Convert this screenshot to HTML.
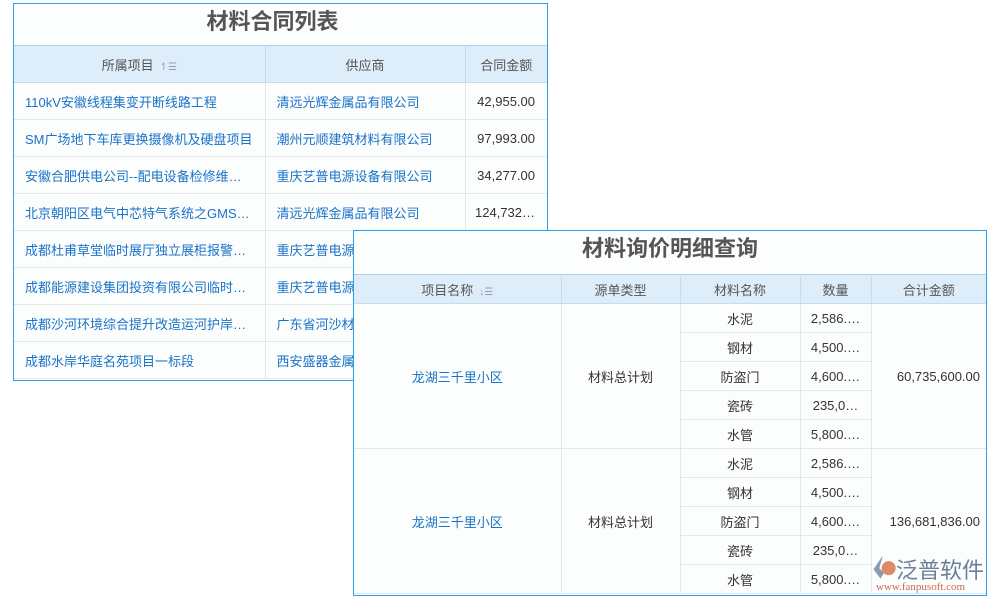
<!DOCTYPE html><html><head><meta charset="utf-8"><style>
body{margin:0;width:1000px;height:600px;background:#fff;position:relative;overflow:hidden;font-family:"Liberation Sans","Noto Sans CJK SC",sans-serif;font-size:13px;color:#333}
.p{position:absolute;border:1px solid #2aa0e8;background:#fcfdfd;box-sizing:border-box;overflow:hidden}
.t{text-align:center;font-size:22px;font-weight:bold;color:#555}
table{border-collapse:collapse;table-layout:fixed;position:absolute;left:0;width:100%}
td,th{border:1px solid #e4e8ea;padding:0;overflow:hidden;white-space:nowrap}
tr td:first-child,tr th:first-child{border-left:none}
tr td:last-child,tr th:last-child{border-right:none}
th{background:#deedfa;font-weight:normal;color:#555;border-color:#c5dcef;border-top:1px solid #a9d0ef}
.b{color:#1a73c8}
.ic{color:#99b;font-size:10px;margin-left:6px}
</style></head><body>
<div class="p" style="left:13px;top:3px;width:535px;height:378px">
<div class="t" style="height:41px;line-height:36px;padding-right:16px">材料合同列表</div>
<table style="top:41px">
<colgroup><col style="width:251px"><col style="width:200px"><col></colgroup>
<tr style="height:37px"><th>所属项目<span class="ic">↿☰</span></th><th>供应商</th><th>合同金额</th></tr>
<tr style="height:37px"><td class="b" style="padding-left:11px">110kV安徽线程集变开断线路工程</td><td class="b" style="padding-left:11px">清远光辉金属品有限公司</td><td style="text-align:right;padding-right:12px">42,955.00</td></tr>
<tr style="height:37px"><td class="b" style="padding-left:11px">SM广场地下车库更换摄像机及硬盘项目</td><td class="b" style="padding-left:11px">潮州元顺建筑材料有限公司</td><td style="text-align:right;padding-right:12px">97,993.00</td></tr>
<tr style="height:37px"><td class="b" style="padding-left:11px">安徽合肥供电公司--配电设备检修维…</td><td class="b" style="padding-left:11px">重庆艺普电源设备有限公司</td><td style="text-align:right;padding-right:12px">34,277.00</td></tr>
<tr style="height:37px"><td class="b" style="padding-left:11px">北京朝阳区电气中芯特气系统之GMS…</td><td class="b" style="padding-left:11px">清远光辉金属品有限公司</td><td style="text-align:right;padding-right:12px">124,732…</td></tr>
<tr style="height:37px"><td class="b" style="padding-left:11px">成都杜甫草堂临时展厅独立展柜报警…</td><td class="b" style="padding-left:11px">重庆艺普电源</td><td></td></tr>
<tr style="height:37px"><td class="b" style="padding-left:11px">成都能源建设集团投资有限公司临时…</td><td class="b" style="padding-left:11px">重庆艺普电源</td><td></td></tr>
<tr style="height:37px"><td class="b" style="padding-left:11px">成都沙河环境综合提升改造运河护岸…</td><td class="b" style="padding-left:11px">广东省河沙材</td><td></td></tr>
<tr style="height:37px"><td class="b" style="padding-left:11px">成都水岸华庭名苑项目一标段</td><td class="b" style="padding-left:11px">西安盛器金属</td><td></td></tr>
</table></div>
<div class="p" style="left:353px;top:230px;width:634px;height:366px">
<div class="t" style="height:43px;line-height:36px">材料询价明细查询</div>
<table style="top:43px;text-align:center">
<colgroup><col style="width:207px"><col style="width:119px"><col style="width:120px"><col style="width:71px"><col></colgroup>
<tr style="height:29px"><th>项目名称<span class="ic">↓☰</span></th><th>源单类型</th><th>材料名称</th><th>数量</th><th>合计金额</th></tr>
<tr style="height:29px"><td rowspan="5" class="b">龙湖三千里小区</td><td rowspan="5">材料总计划</td><td>水泥</td><td>2,586.…</td><td rowspan="5" style="text-align:right;padding-right:6px">60,735,600.00</td></tr>
<tr style="height:29px"><td>钢材</td><td>4,500.…</td></tr>
<tr style="height:29px"><td>防盗门</td><td>4,600.…</td></tr>
<tr style="height:29px"><td>瓷砖</td><td>235,0…</td></tr>
<tr style="height:29px"><td>水管</td><td>5,800.…</td></tr>
<tr style="height:29px"><td rowspan="5" class="b">龙湖三千里小区</td><td rowspan="5">材料总计划</td><td>水泥</td><td>2,586.…</td><td rowspan="5" style="text-align:right;padding-right:6px">136,681,836.00</td></tr>
<tr style="height:29px"><td>钢材</td><td>4,500.…</td></tr>
<tr style="height:29px"><td>防盗门</td><td>4,600.…</td></tr>
<tr style="height:29px"><td>瓷砖</td><td>235,0…</td></tr>
<tr style="height:29px"><td>水管</td><td>5,800.…</td></tr>
</table></div>
<div style="position:absolute;left:870px;top:552px;width:125px;height:46px">
<svg width="28" height="28" viewBox="0 0 24 24" style="position:absolute;left:0;top:1px"><path d="M11 2 L3 14 L9 22 L12 17 L8 13 Z" fill="#8a9bb0"/><circle cx="16" cy="13" r="6" fill="#e08a6a"/></svg>
<div style="position:absolute;left:26px;top:1px;font-size:22px;color:#6b7f99">泛普软件</div>
<div style="position:absolute;left:6px;top:29px;font-size:11px;color:#d06a4a;font-family:'Liberation Serif',serif">www.fanpusoft.com</div>
</div>
</body></html>
